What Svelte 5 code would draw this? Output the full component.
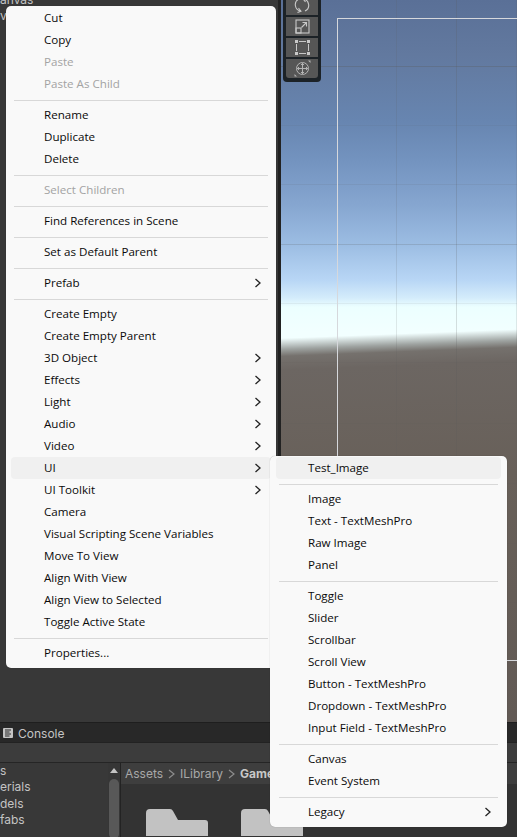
<script>
  const main = [
    [{t:'Cut'},{t:'Copy'},{t:'Paste',d:1},{t:'Paste As Child',d:1}],
    [{t:'Rename'},{t:'Duplicate'},{t:'Delete'}],
    [{t:'Select Children',d:1}],
    [{t:'Find References in Scene'}],
    [{t:'Set as Default Parent'}],
    [{t:'Prefab',s:1}],
    [{t:'Create Empty'},{t:'Create Empty Parent'},{t:'3D Object',s:1},{t:'Effects',s:1},{t:'Light',s:1},{t:'Audio',s:1},{t:'Video',s:1},{t:'UI',s:1,h:1},{t:'UI Toolkit',s:1},{t:'Camera'},{t:'Visual Scripting Scene Variables'},{t:'Move To View'},{t:'Align With View'},{t:'Align View to Selected'},{t:'Toggle Active State'}],
    [{t:'Properties...'}]
  ];
  const sub = [
    [{t:'Test_Image',h:1}],
    [{t:'Image'},{t:'Text - TextMeshPro'},{t:'Raw Image'},{t:'Panel'}],
    [{t:'Toggle'},{t:'Slider'},{t:'Scrollbar'},{t:'Scroll View'},{t:'Button - TextMeshPro'},{t:'Dropdown - TextMeshPro'},{t:'Input Field - TextMeshPro'}],
    [{t:'Canvas'},{t:'Event System'}],
    [{t:'Legacy',s:1}]
  ];
  const vlines = [[115, .14], [175, .2], [235, .14]];
  const hlines = [[66, .3], [125, .08], [184, .1], [244, .2], [303, .08], [362, .08], [423, .08], [483, .08], [543, .08], [602, .08], [662, .08]];
</script>

{#snippet menu(groups, cls)}
  <div class="menu {cls}">
    {#each groups as g, i}
      {#if i > 0}<div class="sep"></div>{/if}
      {#each g as it}
        <div class="item" class:dis={it.d} class:hl={it.h}>
          <span>{it.t}</span>
          {#if it.s}
            <svg class="chev" width="8" height="10" viewBox="0 0 8 10"><path d="M1.5 1 L6 5 L1.5 9" fill="none" stroke="#222" stroke-width="1.3"/></svg>
          {/if}
        </div>
      {/each}
    {/each}
  </div>
{/snippet}

<div class="app">
  <div class="top">
    <div class="hier">
      <div class="hrow">anvas</div>
      <div class="hrow">ve</div>
    </div>
    <div class="scene">
      {#each vlines as [x, a]}
        <div class="grid gv" style="left:{x}px;opacity:{a}"></div>
      {/each}
      {#each hlines as [y, a]}
        <div class="grid gh" style="top:{y}px;opacity:{a}"></div>
      {/each}
      <div class="canvasrect"></div>
      <div class="tools">
        <div class="tool first">
          <svg width="16" height="16" viewBox="0 0 16 16" fill="none" stroke="#c8c8c8" stroke-width="1.1"><path d="M5 2 A6.3 6.3 0 0 0 7 14 M4.5 11 L7 14.2 L3.5 15.5 M11 14 A6.3 6.3 0 0 0 9 2 M11.5 5 L9 1.8 L12.5 0.5"/></svg>
        </div>
        <div class="tool">
          <svg width="15" height="15" viewBox="0 0 15 15" fill="none" stroke="#c8c8c8" stroke-width="1.1"><rect x="1" y="1" width="13" height="13"/><rect x="1" y="9" width="5" height="5"/><path d="M6.5 8.5 L11 4 M7.5 3.5 H11.5 V7.5"/></svg>
        </div>
        <div class="tool">
          <svg width="15" height="15" viewBox="0 0 15 15" fill="#c8c8c8" stroke="none"><rect x="0" y="0" width="3" height="3"/><rect x="12" y="0" width="3" height="3"/><rect x="0" y="12" width="3" height="3"/><rect x="12" y="12" width="3" height="3"/><rect x="4" y="1" width="7" height="1"/><rect x="4" y="13" width="7" height="1"/><rect x="1" y="4" width="1" height="7"/><rect x="13" y="4" width="1" height="7"/></svg>
        </div>
        <div class="tool">
          <svg width="17" height="17" viewBox="0 0 17 17" fill="none" stroke="#b4b4b4" stroke-width="1"><circle cx="8.5" cy="8.5" r="6"/><path d="M8.5 3 V14 M3 8.5 H14"/><path d="M7 5 L8.5 3.5 L10 5 M7 12 L8.5 13.5 L10 12 M5 7 L3.5 8.5 L5 10 M12 7 L13.5 8.5 L12 10"/><path d="M0.5 16.5 L3 16.5 L0.5 14 Z M16.5 0.5 L14 0.5 L16.5 3 Z" fill="#b4b4b4" stroke="none"/></svg>
        </div>
      </div>
    </div>
  </div>
  <div class="bottom">
    <div class="tabbar">
      <svg class="cicon" width="10" height="10" viewBox="0 0 10 10"><rect width="10" height="10" rx="1" fill="#c4c4c4"/><path d="M2 2 H8 M2 4 H6.5 M2 6 H8 M2 8 H6.5" stroke="#2a2a2a" stroke-width="1"/></svg>
      <span>Console</span>
    </div>
    <div class="toolbar"></div>
    <div class="browser">
      <div class="tree">
        <div>s</div><div>erials</div><div>dels</div><div>fabs</div>
      </div>
      <div class="sbar">
        <div class="arrow"></div>
        <div class="thumb"></div>
      </div>
      <div class="files">
        <div class="crumb">
          <span>Assets</span>
          <svg width="7" height="10" viewBox="0 0 7 10"><path d="M1 1 L6 5 L1 9" fill="none" stroke="#8c8c8c" stroke-width="1.2"/></svg>
          <span>ILibrary</span>
          <svg width="7" height="10" viewBox="0 0 7 10"><path d="M1 1 L6 5 L1 9" fill="none" stroke="#8c8c8c" stroke-width="1.2"/></svg>
          <b>GameKit</b>
        </div>
        <div class="folders">
          <svg width="62" height="27" viewBox="0 0 62 27"><path d="M0 4 Q0 0 4 0 H24 Q26 0 27 2 L32 11 H59 Q62 11 62 14 V27 H0 Z" fill="#c2c2c2"/></svg>
          <svg width="62" height="27" viewBox="0 0 62 27"><path d="M0 4 Q0 0 4 0 H24 Q26 0 27 2 L32 11 H59 Q62 11 62 14 V27 H0 Z" fill="#c2c2c2"/></svg>
        </div>
      </div>
    </div>
  </div>
  {@render menu(main, 'm1')}
  {@render menu(sub, 'm2')}
</div>

<style>
  :global(body) { margin: 0; background: #383838; }
  .app {
    position: relative; width: 517px; height: 837px; overflow: hidden;
    background: #383838; display: flex; flex-direction: column;
    font-family: "Open Sans", "Noto Sans CJK KR", sans-serif;
  }
  .top { height: 723px; box-sizing: border-box; display: flex; border-bottom: 1px solid #1e1e1e; }
  .hier { width: 281px; box-sizing: border-box; background: #383838; color: #c4c4c4; font-family: Inter, sans-serif; font-size: 12px; border-right: 3px solid #222; flex: none; margin-top: -8px; }
  .hrow { height: 16px; line-height: 16px; white-space: nowrap; }
  .scene {
    position: relative; flex: 1; overflow: hidden;
    background:
      linear-gradient(177.8deg, rgba(117,113,109,0) 338px, rgba(130,132,129,.75) 349px, #75716d 356px, #6c6662 370px, #686059 480px, #625a55 727px),
      linear-gradient(180deg, #5a7097 0px, #62799f 55px, #6785b0 120px, #7393bf 160px, #86a6d0 205px, #9cbde3 245px, #b8d6f5 280px, #d4ecfb 298px, #ecffff 307px, #f2ffff 332px, #f2ffff 360px);
  }
  .grid { position: absolute; background: #5a5a5a; }
  .gv { top: 0; bottom: 0; width: 1px; }
  .gh { left: 0; right: 0; height: 1px; }
  .canvasrect { position: absolute; left: 56px; top: 18px; width: 300px; height: 641px; border: 1px solid #d6d8dc; }
  .tools {
    position: absolute; left: 2px; top: -4px; width: 38px; height: 86px;
    box-sizing: border-box; background: #1c2227; border-radius: 0 0 4px 4px;
    padding: 0 3px 4px; display: flex; flex-direction: column; gap: 2px;
  }
  .tool { height: 19px; flex: none; background: #565656; display: flex; align-items: center; justify-content: center; }
  .tool svg { display: block; }
  .tool.first { overflow: hidden; align-items: flex-end; padding-bottom: 2px; box-sizing: border-box; }
  .tool:last-child { border-radius: 0 0 3px 3px; height: 19px; }
  .tabbar { height: 20px; background: #282828; border-bottom: 1px solid #222; box-sizing: border-box; display: flex; align-items: center; color: #c4c4c4; font-family: Inter, sans-serif; font-size: 12px; padding: 2px 0 0 3px; gap: 5px; }
  .cicon { display: block; margin-top: -2px; }
  .toolbar { height: 20px; box-sizing: border-box; background: #3c3c3c; border-bottom: 1px solid #252525; }
  .browser { height: 74px; display: flex; background: #383838; font-family: Inter, sans-serif; }
  .tree { width: 108px; flex: none; color: #c4c4c4; font-size: 12px; line-height: 16.4px; padding-top: 0; }
  .sbar { width: 13px; box-sizing: border-box; flex: none; background: #363636; border-right: 1px solid #232323; position: relative; }
  .arrow { position: absolute; left: 2px; top: 5px; border: 4px solid transparent; border-top: 0; border-bottom: 5px solid #c4c4c4; }
  .thumb { position: absolute; left: 1px; top: 16px; width: 10px; height: 60px; background: #585858; border-radius: 5px; }
  .files { flex: 1; background: #333; min-width: 0; overflow: hidden; }
  .crumb { height: 21px; background: #3e3e3e; display: flex; align-items: center; gap: 5px; padding-left: 4px; color: #a8a8a8; font-size: 12px; white-space: nowrap; }
  .crumb b { color: #c8c8c8; font-weight: 700; }
  .folders { display: flex; gap: 33px; padding: 25px 0 0 25px; }
  .folders svg { flex: none; display: block; }
  .menu {
    position: absolute; box-sizing: border-box; background: #f9f9f9;
    border-radius: 5px; color: #0a0a0a; font-size: 11.6px;
    box-shadow: 0 0 1px rgba(0,0,0,.35);
    padding: 1px 5px 4px;
  }
  .m1 { left: 6px; top: 6px; width: 270px; }
  .m2 { left: 270px; top: 456px; width: 237px; padding: 1px 6px 4px; }
  .item { height: 22px; display: flex; align-items: center; justify-content: space-between; padding: 0 9px 0 33px; border-radius: 4px; white-space: nowrap; }
  .item span { margin-top: -1px; }
  .m2 .item { padding-left: 32px; padding-right: 9px; }
  .dis { color: #a3a3a3; }
  .hl { background: #f0f0f0; }
  .sep { height: 1px; margin: 5px 3px 3px 3px; background: #d8d8d8; }
  .chev { display: block; flex: none; }
</style>
